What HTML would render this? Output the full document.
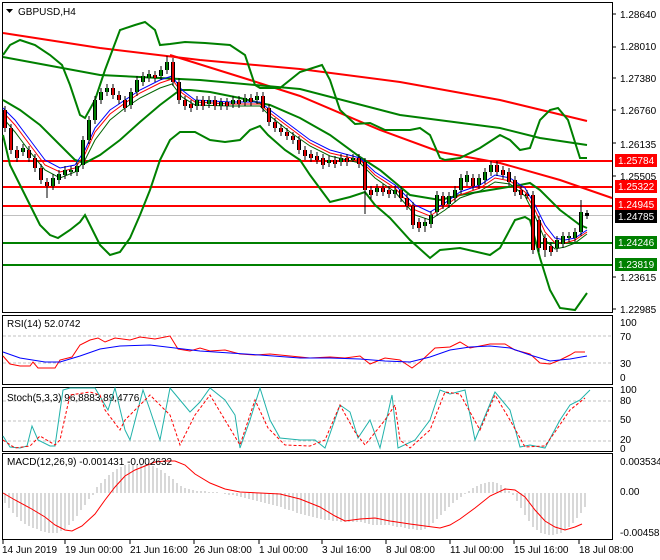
<!DOCTYPE html>
<html><head><meta charset="utf-8"><style>
html,body{margin:0;padding:0;background:#fff;}
svg{display:block;font-family:"Liberation Sans",sans-serif;font-size:10px;}
</style></head><body>
<svg width="660" height="560" viewBox="0 0 660 560" xmlns="http://www.w3.org/2000/svg">
<rect width="660" height="560" fill="#fff"/>
<g fill="none" stroke="#000" stroke-width="1">
<rect x="2.5" y="2.5" width="610" height="310"/>
<rect x="2.5" y="315.5" width="610" height="69"/>
<rect x="2.5" y="387.5" width="610" height="64"/>
<rect x="2.5" y="453.5" width="610" height="86"/>
</g>
<line x1="3" y1="215.5" x2="612" y2="215.5" stroke="#c0c0c0"/>
<g stroke="#ff0000" stroke-width="2">
<line x1="3" y1="161" x2="612" y2="161"/>
<line x1="3" y1="187" x2="612" y2="187"/>
<line x1="3" y1="206" x2="612" y2="206"/>
</g>
<g stroke="#008000" stroke-width="2">
<line x1="3" y1="243" x2="612" y2="243"/>
<line x1="3" y1="265" x2="612" y2="265"/>
</g>
<polyline fill="none" stroke="#ff0000" stroke-width="2" points="3,33 100,48 200,60 300,69 400,82 500,100 587,121"/>
<polyline fill="none" stroke="#ff0000" stroke-width="2" points="170,55 250,80 300,96 380,130 440,152 500,163 560,180 612,198"/>
<polyline fill="none" stroke="#008000" stroke-width="2" points="3,57 100,75 200,80 300,89 400,115 500,128 540,138 587,145"/>
<polyline fill="none" stroke="#008000" stroke-width="2" points="3,55 10,45 20,40 35,45 50,55 62,65 70,85 80,115 85,118 95,100 105,70 120,30 135,25 145,22 155,30 160,45 170,44 185,42 205,43 230,45 245,55 250,70 255,85 260,88 280,88 300,72 322,65 330,80 340,110 355,124 370,123 385,130 410,130 420,128 430,135 440,158 445,160 460,158 480,148 500,135 510,140 520,150 530,148 540,120 550,110 558,108 568,120 580,158 587,158"/>
<polyline fill="none" stroke="#008000" stroke-width="2" points="3,100 20,110 40,125 60,145 75,160 85,163 100,155 120,140 140,122 160,105 180,90 190,90 210,92 240,98 260,103 270,105 300,118 330,135 360,157 380,170 410,195 440,200 460,195 490,190 520,185 530,183 540,190 560,210 580,225 587,228"/>
<polyline fill="none" stroke="#008000" stroke-width="2" points="3,135 10,165 20,185 30,205 40,225 50,235 58,238 70,230 80,222 85,215 90,225 100,245 110,255 120,252 130,238 140,215 150,190 160,160 170,140 180,132 195,132 210,140 225,142 240,140 250,130 260,126 268,135 285,150 300,160 310,175 330,202 350,197 365,192 375,205 390,218 410,240 430,258 440,250 460,248 490,255 500,248 515,220 525,217 530,220 540,258 550,290 560,308 575,310 587,293"/>
<polyline fill="none" stroke="#0000ff" stroke-width="1" points="3,108 15,120 30,140 45,160 60,168 75,165 85,150 95,128 110,110 125,100 140,90 160,80 172,76 182,90 195,100 230,102 260,102 270,110 290,125 310,140 330,150 360,158 375,172 395,185 415,205 430,212 445,203 460,192 480,185 495,175 510,178 525,188 535,205 545,225 555,238 565,240 575,238 587,230"/>
<polyline fill="none" stroke="#ff0000" stroke-width="1" points="3,112 15,125 30,145 45,165 60,172 75,168 85,154 95,132 110,114 125,103 140,93 160,83 172,79 182,93 195,102 230,104 260,104 270,113 290,128 310,143 330,153 360,160 375,175 395,188 415,210 430,216 445,206 460,195 480,188 495,178 510,181 525,192 535,210 545,232 555,243 565,243 575,240 587,232"/>
<polyline fill="none" stroke="#006400" stroke-width="1" points="3,118 15,132 30,152 45,170 60,178 75,172 85,160 95,140 110,120 125,108 140,98 160,88 172,84 182,97 195,105 230,106 260,106 270,116 290,132 310,146 330,156 360,163 375,178 395,192 415,215 430,220 445,210 460,198 480,191 495,182 510,184 525,196 535,216 545,240 555,249 565,247 575,243 587,234"/>
<path stroke="#000" stroke-width="1" fill="none" d="M5,106V132M11,124V154M17,146V162M23,144V156M29,146V162M35,154V172M41,164V184M47,178V198M53,174V190M59,170V184M65,166V179M71,166V176M77,162V176M83,136V169M89,116V144M95,96V124M101,88V104M107,84V96M113,84V99M119,91V104M125,96V112M131,88V109M137,76V96M143,72V86M149,70V82M155,71V82M161,66V80M167,56V74M173,58V86M179,78V104M185,96V110M191,100V112M197,96V110M203,96V110M209,96V108M215,96V110M221,98V110M227,98V110M233,96V108M239,96V108M245,94V106M251,94V106M257,92V104M263,92V112M269,104V126M275,118V132M281,124V136M287,128V140M293,132V144M299,136V154M305,146V160M311,150V162M317,152V164M323,154V169M329,156V167M335,156V168M341,154V166M347,154V166M353,154V162M359,154V168M365,158V214M371,186V199M377,184V196M383,184V196M389,186V198M395,186V198M401,186V202M407,194V210M413,202V229M419,218V232M425,218V232M431,211V228M437,191V216M443,192V209M449,192V208M455,186V202M461,174V194M467,171V186M473,174V190M479,174V189M485,168V184M491,161V176M497,161V176M503,166V179M509,168V186M515,176V196M521,186V199M527,190V199M533,191V254M539,216V252M545,234V257M551,242V256M557,236V252M563,232V248M569,232V242M575,228V242M581,200V236M587,210V219"/>
<path stroke="#000" stroke-width="4" fill="none" d="M5,110V128M11,128V150M17,150V158M29,150V158M35,158V168M41,168V180M47,182V186M113,88V95M119,95V100M125,100V108M155,75V78M173,62V82M179,82V100M185,100V106M191,104V108M203,100V106M215,100V106M227,102V106M239,100V104M251,98V102M263,96V108M269,108V122M275,122V128M281,128V132M287,132V136M293,136V140M299,140V150M305,150V156M311,154V158M317,156V160M323,158V165M335,160V164M347,158V162M359,158V164M365,162V190M371,190V195M383,188V192M389,190V194M401,190V198M407,198V206M413,206V225M419,222V228M443,196V205M473,178V186M497,165V172M503,170V175M509,172V182M515,180V192M521,190V195M527,194V196M533,195V250M539,220V248M545,238V250M551,246V252M587,213V216"/>
<path stroke="#e00000" stroke-width="2" fill="none" d="M5,110V128M11,128V150M17,150V158M29,150V158M35,158V168M41,168V180M47,182V186M113,88V95M119,95V100M125,100V108M155,75V78M173,62V82M179,82V100M185,100V106M191,104V108M203,100V106M215,100V106M227,102V106M239,100V104M251,98V102M263,96V108M269,108V122M275,122V128M281,128V132M287,132V136M293,136V140M299,140V150M305,150V156M311,154V158M317,156V160M323,158V165M335,160V164M347,158V162M359,158V164M365,162V190M371,190V195M383,188V192M389,190V194M401,190V198M407,198V206M413,206V225M419,222V228M443,196V205M473,178V186M497,165V172M503,170V175M509,172V182M515,180V192M521,190V195M527,194V196M533,195V250M539,220V248M545,238V250M551,246V252"/>
<path stroke="#000" stroke-width="4" fill="none" d="M23,148V152M53,178V186M59,174V180M65,170V175M71,170V172M77,166V172M83,140V165M89,120V140M95,100V120M101,92V100M107,88V92M131,92V105M137,80V92M143,76V82M149,74V78M161,70V76M167,62V70M197,100V106M209,100V104M221,102V106M233,100V104M245,98V102M257,96V100M329,160V163M341,158V162M353,158V160M377,188V192M395,190V194M425,222V226M431,215V224M437,195V212M449,196V204M455,190V198M461,178V190M467,175V182M479,178V185M485,172V180M491,165V172M557,240V248M563,236V244M569,236V238M575,232V238M581,212V232"/>
<path stroke="#008000" stroke-width="2" fill="none" d="M23,148V152M53,178V186M59,174V180M65,170V175M71,170V172M77,166V172M83,140V165M89,120V140M95,100V120M101,92V100M107,88V92M131,92V105M137,80V92M143,76V82M149,74V78M161,70V76M167,62V70M197,100V106M209,100V104M221,102V106M233,100V104M245,98V102M257,96V100M329,160V163M341,158V162M353,158V160M377,188V192M395,190V194M425,222V226M431,215V224M437,195V212M449,196V204M455,190V198M461,178V190M467,175V182M479,178V185M485,172V180M491,165V172M557,240V248M563,236V244M569,236V238M575,232V238M581,212V232"/>
<polygon points="6,9 13,9 9.5,13" fill="#000"/>
<text x="18" y="15" fill="#000">GBPUSD,H4</text>
<g fill="#000">
<text x="620" y="18">1.28640</text><text x="620" y="50">1.28010</text><text x="620" y="82">1.27380</text>
<text x="620" y="114">1.26760</text><text x="620" y="148">1.26135</text><text x="620" y="180">1.25505</text>
<text x="620" y="281">1.23615</text><text x="620" y="313">1.22985</text>
</g>
<g>
<rect x="615" y="154" width="42" height="13" fill="#ff0000"/><text x="618" y="164" fill="#fff">1.25784</text>
<rect x="615" y="180" width="42" height="13" fill="#ff0000"/><text x="618" y="190" fill="#fff">1.25322</text>
<rect x="615" y="198" width="42" height="13" fill="#ff0000"/><text x="618" y="208" fill="#fff">1.24945</text>
<rect x="615" y="210" width="42" height="13" fill="#000"/><text x="618" y="220" fill="#fff">1.24785</text>
<rect x="615" y="236" width="42" height="13" fill="#008000"/><text x="618" y="246" fill="#fff">1.24246</text>
<rect x="615" y="258" width="42" height="13" fill="#008000"/><text x="618" y="268" fill="#fff">1.23819</text>
</g>
<g stroke="#000"><line x1="612" y1="14" x2="616" y2="14"/><line x1="612" y1="47" x2="616" y2="47"/><line x1="612" y1="78" x2="616" y2="78"/><line x1="612" y1="110" x2="616" y2="110"/><line x1="612" y1="143" x2="616" y2="143"/><line x1="612" y1="176" x2="616" y2="176"/><line x1="612" y1="277" x2="616" y2="277"/><line x1="612" y1="309" x2="616" y2="309"/></g>
<!-- RSI -->
<g stroke="#c0c0c0" stroke-dasharray="3,2"><line x1="3" y1="336" x2="612" y2="336"/><line x1="3" y1="363" x2="612" y2="363"/></g>
<text x="7" y="327" fill="#000">RSI(14) 52.0742</text>
<polyline fill="none" stroke="#ff0000" points="3,356 10,364 20,366 30,366 33,362 38,368 50,368 55,368 60,360 72,357 80,345 90,340 98,338 105,342 115,338 130,340 140,337 155,339 170,336 178,349 190,351 200,348 210,351 225,350 240,354 255,355 270,354 290,356 310,358 330,357 345,358 360,356 370,364 385,358 400,360 412,368 420,362 435,348 450,347 460,342 470,348 490,344 505,344 515,350 530,354 540,363 550,364 560,360 570,355 575,352 585,352"/>
<polyline fill="none" stroke="#0000ff" points="3,352 20,358 45,362 60,362 80,356 100,349 120,346 150,345 175,348 200,351 230,353 260,355 300,358 330,358 360,359 385,361 410,362 430,357 450,350 470,347 490,346 510,348 530,355 550,361 570,359 587,356"/>
<g fill="#000"><text x="620" y="326">100</text><text x="620" y="340">70</text><text x="620" y="367">30</text><text x="620" y="381">0</text></g>
<!-- Stoch -->
<g stroke="#c0c0c0" stroke-dasharray="3,2"><line x1="3" y1="401" x2="612" y2="401"/><line x1="3" y1="421" x2="612" y2="421"/><line x1="3" y1="441" x2="612" y2="441"/></g>
<text x="7" y="401" fill="#000">Stoch(5,3,3) 96,8883 89,4776</text>
<polyline fill="none" stroke="#20b2aa" points="3,436 10,447 20,448 27,446 32,426 38,440 50,446 55,446 63,390 70,388 85,388 95,388 108,410 115,388 125,430 130,440 143,390 150,410 160,440 170,388 180,400 190,412 200,402 210,388 225,400 235,415 240,448 250,420 260,388 270,420 280,438 300,440 315,440 325,448 340,405 350,412 358,438 370,420 380,448 392,395 398,448 415,440 430,420 440,390 450,394 465,390 475,440 495,392 510,410 520,447 530,445 545,448 560,420 570,405 580,400 590,390"/>
<polyline fill="none" stroke="#ff0000" stroke-dasharray="3,2" points="3,440 15,448 30,446 40,436 55,445 60,440 70,395 90,392 100,395 105,410 120,430 125,420 135,410 150,395 170,415 180,445 195,415 210,395 225,420 240,445 255,400 268,428 285,445 310,446 325,440 340,405 355,432 365,445 385,420 395,405 400,440 410,448 430,430 445,392 460,394 470,412 480,430 495,395 510,420 525,447 545,446 555,432 570,410 585,398"/>
<g fill="#000"><text x="620" y="393">100</text><text x="620" y="404">80</text><text x="620" y="423">50</text><text x="620" y="443">20</text><text x="620" y="452">0</text></g>
<!-- MACD -->
<g stroke="#b0b0b0" stroke-width="1">
<path d="M5,493v10M9,493v15M13,493v20M17,493v24M21,493v28M25,493v31M29,493v33M33,493v35M37,493v36M41,493v38M45,493v39M49,493v40M53,493v40M57,493v40M61,493v38M65,493v36M69,493v32M73,493v28M77,493v23M81,493v17M85,493v12M89,493v6M93,493v2M97,493v-6M101,493v-10M105,493v-14M109,493v-18M113,493v-21M117,493v-24M121,493v-26M125,493v-28M129,493v-29M133,493v-29M137,493v-29M141,493v-29M145,493v-28M149,493v-28M153,493v-27M157,493v-25M161,493v-23M165,493v-20M169,493v-17M173,493v-14M177,493v-10M181,493v-7M185,493v-5M189,493v-4M193,493v-3M197,493v-2M201,493v-2M205,493v-2M209,493v-1M213,493v-1M217,493v-1M225,493v1M229,493v2M233,493v2M237,493v3M241,493v4M245,493v5M249,493v6M253,493v7M257,493v8M261,493v9M265,493v10M269,493v11M273,493v12M277,493v13M281,493v14M285,493v16M289,493v17M293,493v18M297,493v20M301,493v21M305,493v22M309,493v23M313,493v24M317,493v25M321,493v26M325,493v27M329,493v27M333,493v28M337,493v28M341,493v29M345,493v29M349,493v29M353,493v29M357,493v29M361,493v29M365,493v30M369,493v31M373,493v32M377,493v32M381,493v32M385,493v32M389,493v32M393,493v33M397,493v34M401,493v34M405,493v35M409,493v36M413,493v36M417,493v37M421,493v37M425,493v36M429,493v34M433,493v30M437,493v26M441,493v22M445,493v18M449,493v14M453,493v10M457,493v7M461,493v4M465,493v1M469,493v-2M473,493v-5M477,493v-7M481,493v-9M485,493v-10M489,493v-11M493,493v-11M497,493v-10M501,493v-8M505,493v-5M509,493v-2M513,493v2M517,493v8M521,493v15M525,493v22M529,493v28M533,493v34M537,493v37M541,493v40M545,493v41M549,493v42M553,493v42M557,493v41M561,493v40M565,493v37M569,493v34M573,493v30M577,493v25M581,493v20M585,493v14"/>
</g>
<polyline fill="none" stroke="#ff0000" points="3,493 15,500 30,508 45,517 55,525 65,530 72,531 82,526 95,514 105,500 115,487 125,476 135,470 145,466 155,462 165,461 175,461 185,465 195,474 210,483 225,489 240,492 260,493 280,494 300,499 320,507 335,516 345,521 360,519 375,518 390,521 410,524 425,526 440,528 450,525 460,519 475,508 490,496 505,489 515,490 525,497 535,510 545,521 555,527 565,530 575,527 582,524"/>
<text x="7" y="465" fill="#000">MACD(12,26,9) -0.001431 -0.002632</text>
<g fill="#000"><text x="620" y="465">0.003534</text><text x="620" y="495">0.00</text><text x="620" y="536">-0.004583</text></g>
<g fill="#000"><text x="2" y="553">14 Jun 2019</text><text x="65" y="553">19 Jun 00:00</text><text x="130" y="553">21 Jun 16:00</text><text x="194" y="553">26 Jun 08:00</text><text x="259" y="553">1 Jul 00:00</text><text x="322" y="553">3 Jul 16:00</text><text x="386" y="553">8 Jul 08:00</text><text x="450" y="553">11 Jul 00:00</text><text x="514" y="553">15 Jul 16:00</text><text x="579" y="553">18 Jul 08:00</text></g>
<g stroke="#000"><path d="M3,540v4M65,540v4M130,540v4M194,540v4M259,540v4M322,540v4M386,540v4M450,540v4M514,540v4M579,540v4"/></g>
</svg>
</body></html>
